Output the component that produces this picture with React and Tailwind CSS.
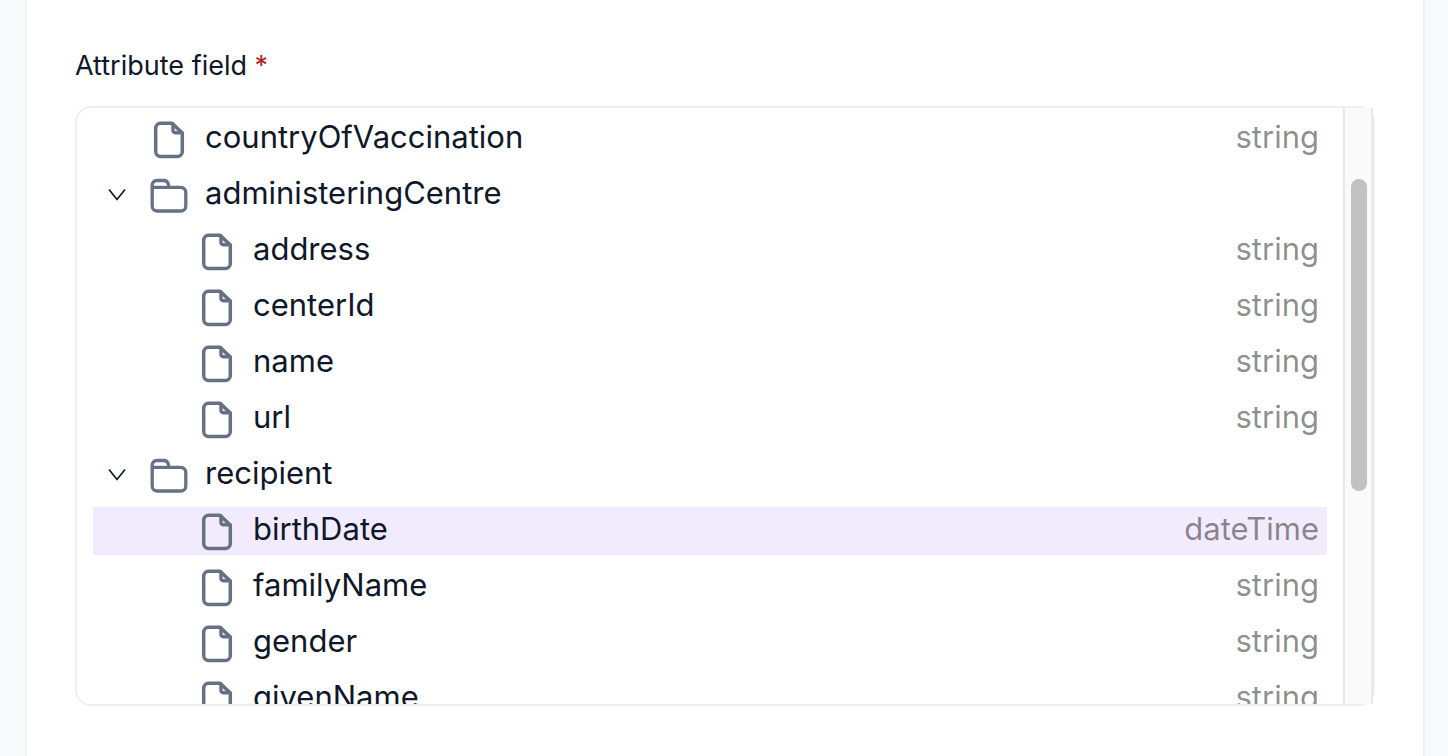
const nodes = [
  { name: 'countryOfVaccination', type: 'string', level: 1 },
  { name: 'administeringCentre', folder: true, level: 1 },
  { name: 'address', type: 'string', level: 2 },
  { name: 'centerId', type: 'string', level: 2 },
  { name: 'name', type: 'string', level: 2 },
  { name: 'url', type: 'string', level: 2 },
  { name: 'recipient', folder: true, level: 1 },
  { name: 'birthDate', type: 'dateTime', level: 2, selected: true },
  { name: 'familyName', type: 'string', level: 2 },
  { name: 'gender', type: 'string', level: 2 },
  { name: 'givenName', type: 'string', level: 2 },
];

function FileIcon() {
  return (
    <svg aria-hidden="true" viewBox="0 0 40 40" className="size-10 shrink-0 text-[#677084]" fill="none" stroke="currentColor" strokeWidth="3.5" strokeLinejoin="round" strokeLinecap="round">
      <path d="M23 4.2H11.7a5 5 0 0 0-5 5v23.2a5 5 0 0 0 5 5h16.6a5 5 0 0 0 5-5V14Z" />
      <path d="M24 5v6.4a2.3 2.3 0 0 0 2.3 2.3h6.6" />
    </svg>
  );
}

function FolderIcon() {
  return (
    <svg aria-hidden="true" viewBox="0 0 40 40" className="size-10 shrink-0 text-[#677084]" fill="none" stroke="currentColor" strokeWidth="3.3" strokeLinejoin="round" strokeLinecap="round">
      <path d="M3.2 12.4V10a4.5 4.5 0 0 1 4.5-4.5h6.8a5 5 0 0 1 4.9 4l.6 2.9" />
      <path d="M3.2 12.4h28.6a5 5 0 0 1 5 5V31a5 5 0 0 1-5 5H8.2a5 5 0 0 1-5-5Z" />
    </svg>
  );
}

function Row({ node }) {
  return (
    <li role="treeitem" aria-selected={Boolean(node.selected)} className={node.selected ? 'flex h-12 shrink-0 items-center bg-[#f2ebfd] pr-2' : 'flex h-12 shrink-0 items-center pr-2'}>
      {node.level === 2 && <span className="w-12 shrink-0" />}
      {node.folder ? (
        <button type="button" aria-label={'Collapse ' + node.name} className="flex size-12 shrink-0 items-center justify-center text-[#0f172a]">
          <svg aria-hidden="true" viewBox="0 0 20 20" className="size-5" fill="none" stroke="currentColor" strokeWidth="1.7">
            <path d="m2 4.5 8 10 8-10" />
          </svg>
        </button>
      ) : (
        <span className="w-12 shrink-0" />
      )}
      <span className="flex min-w-0 items-center gap-4 pl-2">
        {node.folder ? <FolderIcon /> : <FileIcon />}
        <span className="pb-1 text-[31px] leading-10">{node.name}</span>
      </span>
      <span className="ml-auto pb-1 text-[31px] leading-10 text-black/45">{node.type}</span>
    </li>
  );
}

export default function App() {
  return (
    <div className="min-h-screen bg-[#f8fafc] pr-[23px] pl-[25px] font-['Inter',sans-serif] text-[#0f172a]">
      <main className="min-h-screen border-x-2 border-[#eff0f1] bg-white px-12 pt-[46px] pb-12">
        <h2 id="attribute-label" className="text-[27px] leading-10">
          Attribute field <span className="text-[#b42318]">*</span>
        </h2>
        <div className="mt-5 flex h-[600px] rounded-2xl border-2 border-[#efefef]">
          <ul role="tree" aria-labelledby="attribute-label" className="flex min-w-0 flex-1 flex-col gap-2 overflow-hidden px-4 pt-[7px]">
            {nodes.map((node) => (
              <Row key={node.name} node={node} />
            ))}
          </ul>
          <div aria-hidden="true" className="w-[30px] border-x-2 border-[#e8e8e8] bg-[#fafafa] pt-[71px] pl-1.5">
            <div className="h-[312px] w-4 rounded-full bg-[#c1c1c1]" />
          </div>
        </div>
      </main>
    </div>
  );
}
